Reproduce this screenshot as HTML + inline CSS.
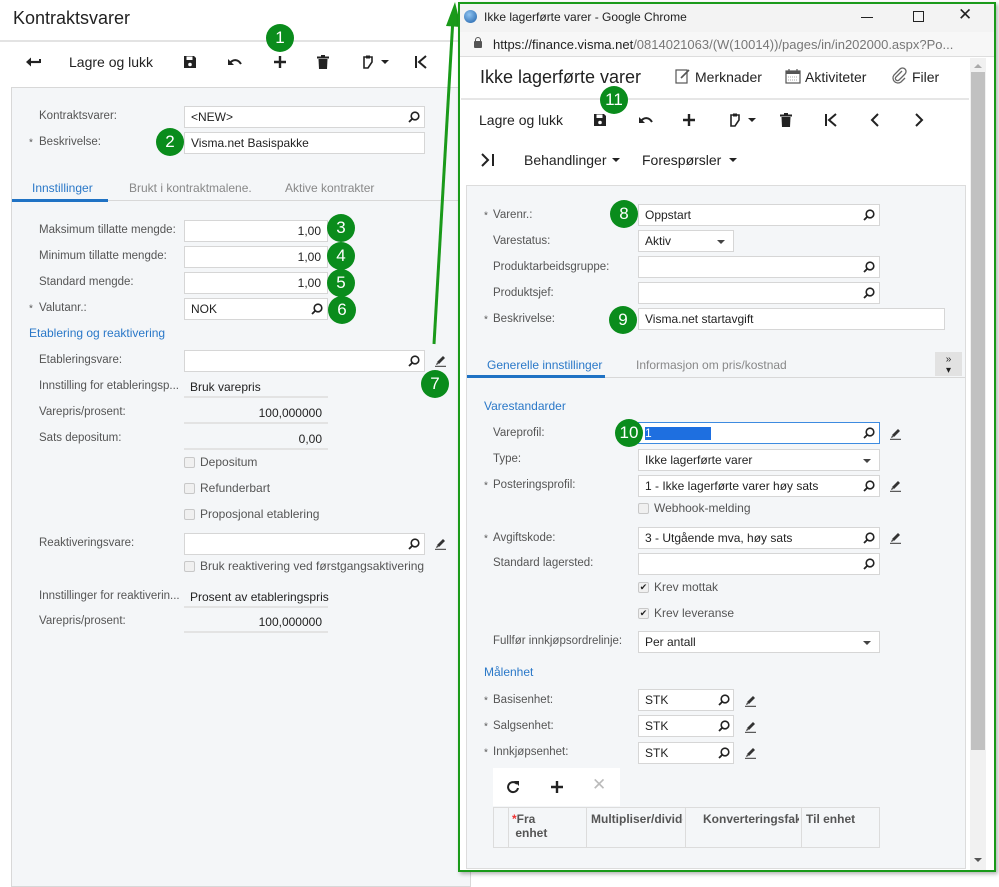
<!DOCTYPE html>
<html><head><meta charset="utf-8">
<style>
*{margin:0;padding:0;box-sizing:border-box}
body{width:999px;height:876px;position:relative;overflow:hidden;background:#fff;font-family:"Liberation Sans",Arial,sans-serif;font-size:12px;color:#222}
.a{position:absolute;white-space:nowrap}
.lbl{position:absolute;color:#555;font-size:11.5px;white-space:nowrap;transform:translateY(-50%)}
.star{position:absolute;color:#555;font-size:10px;transform:translateY(-50%)}
.inp{position:absolute;background:#fff;border:1px solid #d6d6d6;height:22px;font-size:12px;line-height:20px;padding-left:6px;white-space:nowrap}
.num{text-align:right;padding-right:6px}
.ro{position:absolute;border-bottom:2px solid #e3e3e3;height:22px;line-height:22px;padding-left:6px;font-size:12px;white-space:nowrap}
.c{position:absolute;width:28px;height:28px;border-radius:50%;background:#0a8c1c;color:#fff;font-size:17px;text-align:center;line-height:28px;transform:translate(-50%,-50%)}
.cb{position:absolute;width:11px;height:11px;border:1px solid #c8c8c8;border-radius:2px;background:#f0f0f0}
.cbt{position:absolute;color:#555;font-size:12px;transform:translateY(-50%);white-space:nowrap}
.blue{color:#2a78c8}
.mag{position:absolute;width:12px;height:12px}
.pen{position:absolute;width:13px;height:13px}
.sel::after{content:"";position:absolute;right:8px;top:9px;border:4px solid transparent;border-top:4px solid #444}
.tb{position:absolute;transform:translate(-50%,-50%);font-size:15px;color:#222}
</style></head><body>
<svg width="0" height="0" style="position:absolute"><defs>
<symbol id="m" viewBox="0 0 12 12"><circle cx="7" cy="5" r="3.8" fill="none" stroke="#222" stroke-width="1.6"/><line x1="4.3" y1="7.7" x2="1" y2="11" stroke="#222" stroke-width="1.8"/></symbol>
<symbol id="p" viewBox="0 0 13 13"><path d="M3 8 L9 2 L11 4 L5 10 Z" fill="#333"/><path d="M3 8.5 L2 11 L4.5 10Z" fill="#333"/><path d="M1 12.3 H12" stroke="#333" stroke-width="1"/></symbol>
<symbol id="save" viewBox="0 0 14 14"><path d="M1 1 H11 L13 3 V13 H1 Z" fill="#222"/><rect x="3.5" y="1.5" width="6" height="3.5" fill="#fff"/><circle cx="7" cy="9.5" r="1.8" fill="#fff"/></symbol>
<symbol id="undo" viewBox="0 0 16 12"><path d="M3 6 C6 2,11 2,14 7" fill="none" stroke="#222" stroke-width="2"/><path d="M1 2 L1 8 L7 8Z" fill="#222"/></symbol>
<symbol id="plus" viewBox="0 0 14 14"><path d="M7 1 V13 M1 7 H13" stroke="#222" stroke-width="2.4"/></symbol>
<symbol id="trash" viewBox="0 0 12 14"><rect x="0" y="1.5" width="12" height="2" fill="#222"/><rect x="4" y="0" width="4" height="2" fill="#222"/><path d="M1.5 4 H10.5 L10 14 H2 Z" fill="#222"/></symbol>
<symbol id="clip" viewBox="0 0 12 14"><path d="M2 2 H10 V7 L6 13 H2 Z" fill="none" stroke="#222" stroke-width="1.6"/><rect x="4" y="0.5" width="4" height="3" fill="#222"/></symbol>
<symbol id="first" viewBox="0 0 14 14"><path d="M2 1 V13" stroke="#222" stroke-width="2"/><path d="M12 1 L5 7 L12 13" fill="none" stroke="#222" stroke-width="2"/></symbol>
</defs></svg>

<!-- LEFT -->
<div class="a" style="left:13px;top:8px;font-size:18px;color:#222">Kontraktsvarer</div>
<div class="a" style="left:0;top:40px;width:460px;height:2px;background:#e3e3e3"></div>
<svg class="a" style="left:25px;top:56px" width="16" height="12"><path d="M15 6 H4" stroke="#222" stroke-width="2.2"/><path d="M1 6 L6 1.5 V10.5Z" fill="#222"/><path d="M15 3 V7" stroke="#222" stroke-width="2"/></svg>
<div class="a" style="left:69px;top:54px;font-size:14px">Lagre og lukk</div>
<svg class="a" style="left:183px;top:55px" width="14" height="14"><use href="#save"/></svg>
<svg class="a" style="left:227px;top:57px" width="16" height="12"><use href="#undo"/></svg>
<svg class="a" style="left:273px;top:55px" width="14" height="14"><use href="#plus"/></svg>
<svg class="a" style="left:317px;top:55px" width="12" height="14"><use href="#trash"/></svg>
<svg class="a" style="left:362px;top:55px" width="12" height="14"><use href="#clip"/></svg>
<div class="a" style="left:381px;top:60px;border:4px solid transparent;border-top:4px solid #222"></div>
<svg class="a" style="left:414px;top:55px" width="14" height="14"><use href="#first"/></svg>
<div class="c" style="left:280px;top:38px">1</div>

<div class="a" style="left:11px;top:87px;width:460px;height:800px;background:#f4f6f8;border:1px solid #d8d8d8"></div>
<div class="lbl" style="left:39px;top:116px">Kontraktsvarer:</div>
<div class="inp" style="left:184px;top:106px;width:241px">&lt;NEW&gt;</div>
<svg class="mag" style="left:408px;top:111px"><use href="#m"/></svg>
<div class="star" style="left:29px;top:143px">*</div>
<div class="lbl" style="left:39px;top:142px">Beskrivelse:</div>
<div class="inp" style="left:184px;top:132px;width:241px">Visma.net Basispakke</div>
<div class="c" style="left:170px;top:142px">2</div>

<div class="a" style="left:12px;top:200px;width:448px;height:1px;background:#d8d8d8"></div>
<div class="a blue" style="left:32px;top:181px">Innstillinger</div>
<div class="a" style="left:12px;top:199px;width:96px;height:3px;background:#1f72c4"></div>
<div class="a" style="left:129px;top:181px;color:#888">Brukt i kontraktmalene.</div>
<div class="a" style="left:285px;top:181px;color:#888">Aktive kontrakter</div>

<div class="lbl" style="left:39px;top:230px">Maksimum tillatte mengde:</div>
<div class="inp num" style="left:184px;top:220px;width:144px">1,00</div>
<div class="lbl" style="left:39px;top:256px">Minimum tillatte mengde:</div>
<div class="inp num" style="left:184px;top:246px;width:144px">1,00</div>
<div class="lbl" style="left:39px;top:282px">Standard mengde:</div>
<div class="inp num" style="left:184px;top:272px;width:144px">1,00</div>
<div class="star" style="left:29px;top:309px">*</div>
<div class="lbl" style="left:39px;top:308px">Valutanr.:</div>
<div class="inp" style="left:184px;top:298px;width:144px">NOK</div>
<svg class="mag" style="left:311px;top:303px"><use href="#m"/></svg>
<div class="c" style="left:341px;top:228px">3</div>
<div class="c" style="left:341px;top:256px">4</div>
<div class="c" style="left:341px;top:283px">5</div>
<div class="c" style="left:342px;top:310px">6</div>

<div class="a blue" style="left:29px;top:326px">Etablering og reaktivering</div>
<div class="lbl" style="left:39px;top:360px">Etableringsvare:</div>
<div class="inp" style="left:184px;top:350px;width:241px"></div>
<svg class="mag" style="left:408px;top:355px"><use href="#m"/></svg>
<svg class="pen" style="left:434px;top:354px"><use href="#p"/></svg>
<div class="c" style="left:435px;top:384px">7</div>
<div class="lbl" style="left:39px;top:386px">Innstilling for etableringsp...</div>
<div class="ro" style="left:184px;top:376px;width:144px">Bruk varepris</div>
<div class="lbl" style="left:39px;top:412px">Varepris/prosent:</div>
<div class="ro num" style="left:184px;top:402px;width:144px">100,000000</div>
<div class="lbl" style="left:39px;top:438px">Sats depositum:</div>
<div class="ro num" style="left:184px;top:428px;width:144px">0,00</div>
<div class="cb" style="left:184px;top:457px"></div><div class="cbt" style="left:200px;top:462px">Depositum</div>
<div class="cb" style="left:184px;top:483px"></div><div class="cbt" style="left:200px;top:488px">Refunderbart</div>
<div class="cb" style="left:184px;top:509px"></div><div class="cbt" style="left:200px;top:514px">Proposjonal etablering</div>
<div class="lbl" style="left:39px;top:543px">Reaktiveringsvare:</div>
<div class="inp" style="left:184px;top:533px;width:241px"></div>
<svg class="mag" style="left:408px;top:538px"><use href="#m"/></svg>
<svg class="pen" style="left:434px;top:537px"><use href="#p"/></svg>
<div class="cb" style="left:184px;top:561px"></div><div class="cbt" style="left:200px;top:566px">Bruk reaktivering ved førstgangsaktivering</div>
<div class="lbl" style="left:39px;top:596px">Innstillinger for reaktiverin...</div>
<div class="ro" style="left:184px;top:586px;width:144px">Prosent av etableringspris</div>
<div class="lbl" style="left:39px;top:621px">Varepris/prosent:</div>
<div class="ro num" style="left:184px;top:611px;width:144px">100,000000</div>

<!-- arrow -->
<svg class="a" style="left:0;top:0" width="999" height="876">
<line x1="434" y1="344" x2="453" y2="18" stroke="#1a9a1a" stroke-width="3"/>
<path d="M446 26 L455 2 L461 27 Z" fill="#1a9a1a"/>
</svg>

<!-- RIGHT WINDOW -->
<div class="a" style="left:458px;top:2px;width:538px;height:870px;border:2px solid #1a9a1a;background:#fff;box-shadow:2px 2px 4px rgba(0,0,0,.3)"></div>
<div class="a" style="left:460px;top:4px;width:534px;height:28px;background:#f3f3f3"></div>
<div class="a" style="left:464px;top:10px;width:13px;height:13px;border-radius:50%;background:radial-gradient(circle at 40% 35%,#8fc3f0,#1c5fa8)"></div>
<div class="a" style="left:484px;top:10px;font-size:12px;color:#222">Ikke lagerførte varer - Google Chrome</div>
<div class="a" style="left:861px;top:17px;width:12px;height:1px;background:#222"></div>
<div class="a" style="left:913px;top:11px;width:11px;height:11px;border:1px solid #222"></div>
<div class="a" style="left:958px;top:5px;font-size:17px;color:#222">✕</div>
<div class="a" style="left:460px;top:32px;width:534px;height:25px;background:#f7f7f7;border-bottom:1px solid #ddd"></div>
<div class="a" style="left:474px;top:41px;width:8px;height:7px;background:#555;border-radius:1px"></div>
<div class="a" style="left:475px;top:37px;width:6px;height:6px;border:1.5px solid #555;border-radius:3px 3px 0 0"></div>
<div class="a" style="left:493px;top:37px;font-size:13px;color:#777"><span style="color:#222">https://finance.visma.net</span>/0814021063/(W(10014))/pages/in/in202000.aspx?Po...</div>

<div class="a" style="left:970px;top:58px;width:16px;height:812px;background:#f1f1f1"></div>
<div class="a" style="left:971px;top:72px;width:14px;height:678px;background:#c1c1c1"></div>
<div class="a" style="left:974px;top:64px;border:4px solid transparent;border-bottom:4px solid #aaa;border-top:0"></div>
<div class="a" style="left:974px;top:858px;border:4px solid transparent;border-top:4px solid #555;border-bottom:0"></div>

<div class="a" style="left:480px;top:67px;font-size:18px;color:#222">Ikke lagerførte varer</div>
<svg class="a" style="left:675px;top:68px" width="16" height="16"><rect x="1" y="2" width="11" height="13" fill="none" stroke="#555" stroke-width="1.2"/><path d="M6 10 L14 2" stroke="#555" stroke-width="1.6"/></svg>
<div class="a" style="left:695px;top:69px;font-size:14px">Merknader</div>
<svg class="a" style="left:785px;top:68px" width="16" height="16"><rect x="1" y="3" width="14" height="12" fill="none" stroke="#555" stroke-width="1.2"/><rect x="1" y="3" width="14" height="3" fill="#555"/><path d="M4 1 V4 M12 1 V4" stroke="#555" stroke-width="1.2"/><path d="M3 9 H13 M3 12 H13" stroke="#aaa" stroke-width="1" stroke-dasharray="1 1"/></svg>
<div class="a" style="left:805px;top:69px;font-size:14px">Aktiviteter</div>
<svg class="a" style="left:891px;top:67px" width="16" height="17"><path d="M11 4 L5 10 A2 2 0 0 0 8 13 L14 7 A3.5 3.5 0 0 0 9 2 L3 8 A5 5 0 0 0 10 15 L14 11" fill="none" stroke="#666" stroke-width="1.3"/></svg>
<div class="a" style="left:912px;top:69px;font-size:14px">Filer</div>
<div class="a" style="left:461px;top:98px;width:508px;height:2px;background:#e6e6e6"></div>

<div class="a" style="left:479px;top:112px;font-size:14px">Lagre og lukk</div>
<svg class="a" style="left:593px;top:113px" width="14" height="14"><use href="#save"/></svg>
<svg class="a" style="left:638px;top:115px" width="16" height="12"><use href="#undo"/></svg>
<svg class="a" style="left:682px;top:113px" width="14" height="14"><use href="#plus"/></svg>
<svg class="a" style="left:729px;top:113px" width="12" height="14"><use href="#clip"/></svg>
<div class="a" style="left:748px;top:118px;border:4px solid transparent;border-top:4px solid #222"></div>
<svg class="a" style="left:780px;top:113px" width="12" height="14"><use href="#trash"/></svg>
<svg class="a" style="left:824px;top:113px" width="14" height="14"><use href="#first"/></svg>
<svg class="a" style="left:869px;top:113px" width="12" height="14"><path d="M9 1 L3 7 L9 13" fill="none" stroke="#222" stroke-width="2"/></svg>
<svg class="a" style="left:913px;top:113px" width="12" height="14"><path d="M3 1 L9 7 L3 13" fill="none" stroke="#222" stroke-width="2"/></svg>
<div class="c" style="left:614px;top:100px">11</div>

<svg class="a" style="left:481px;top:153px" width="14" height="14"><path d="M1 1 L7 7 L1 13" fill="none" stroke="#222" stroke-width="2"/><path d="M12 1 V13" stroke="#222" stroke-width="2"/></svg>
<div class="a" style="left:524px;top:152px;font-size:14px">Behandlinger</div>
<div class="a" style="left:612px;top:158px;border:4px solid transparent;border-top:4px solid #222"></div>
<div class="a" style="left:642px;top:152px;font-size:14px">Forespørsler</div>
<div class="a" style="left:729px;top:158px;border:4px solid transparent;border-top:4px solid #222"></div>

<div class="a" style="left:466px;top:185px;width:500px;height:684px;background:#f4f6f8;border:1px solid #dcdcdc"></div>
<div class="star" style="left:484px;top:216px">*</div>
<div class="lbl" style="left:493px;top:215px">Varenr.:</div>
<div class="inp" style="left:638px;top:204px;width:242px">Oppstart</div>
<svg class="mag" style="left:863px;top:209px"><use href="#m"/></svg>
<div class="c" style="left:624px;top:214px">8</div>
<div class="lbl" style="left:493px;top:241px">Varestatus:</div>
<div class="inp sel" style="left:638px;top:230px;width:96px">Aktiv</div>
<div class="lbl" style="left:493px;top:267px">Produktarbeidsgruppe:</div>
<div class="inp" style="left:638px;top:256px;width:242px"></div>
<svg class="mag" style="left:863px;top:261px"><use href="#m"/></svg>
<div class="lbl" style="left:493px;top:293px">Produktsjef:</div>
<div class="inp" style="left:638px;top:282px;width:242px"></div>
<svg class="mag" style="left:863px;top:287px"><use href="#m"/></svg>
<div class="star" style="left:484px;top:320px">*</div>
<div class="lbl" style="left:493px;top:319px">Beskrivelse:</div>
<div class="inp" style="left:638px;top:308px;width:307px">Visma.net startavgift</div>
<div class="c" style="left:623px;top:320px">9</div>

<div class="a" style="left:467px;top:377px;width:498px;height:1px;background:#d8d8d8"></div>
<div class="a blue" style="left:487px;top:358px">Generelle innstillinger</div>
<div class="a" style="left:467px;top:375px;width:138px;height:3px;background:#1f72c4"></div>
<div class="a" style="left:636px;top:358px;color:#888">Informasjon om pris/kostnad</div>
<div class="a" style="left:935px;top:352px;width:27px;height:24px;background:#e2e2e2;font-size:10px;text-align:center;line-height:11px;padding-top:2px">»<br>▾</div>

<div class="a blue" style="left:484px;top:399px">Varestandarder</div>
<div class="lbl" style="left:493px;top:433px">Vareprofil:</div>
<div class="inp" style="left:638px;top:422px;width:242px;border-color:#3d8be0"><span style="background:#1e6fe0;color:#fff;display:inline-block;width:66px;line-height:13px">1</span></div>
<svg class="mag" style="left:863px;top:427px"><use href="#m"/></svg>
<svg class="pen" style="left:889px;top:427px"><use href="#p"/></svg>
<div class="c" style="left:629px;top:433px">10</div>
<div class="lbl" style="left:493px;top:459px">Type:</div>
<div class="inp sel" style="left:638px;top:449px;width:242px">Ikke lagerførte varer</div>
<div class="star" style="left:484px;top:486px">*</div>
<div class="lbl" style="left:493px;top:485px">Posteringsprofil:</div>
<div class="inp" style="left:638px;top:475px;width:242px">1 - Ikke lagerførte varer høy sats</div>
<svg class="mag" style="left:863px;top:480px"><use href="#m"/></svg>
<svg class="pen" style="left:889px;top:479px"><use href="#p"/></svg>
<div class="cb" style="left:638px;top:503px"></div><div class="cbt" style="left:654px;top:508px">Webhook-melding</div>
<div class="star" style="left:484px;top:539px">*</div>
<div class="lbl" style="left:493px;top:538px">Avgiftskode:</div>
<div class="inp" style="left:638px;top:527px;width:242px">3 - Utgående mva, høy sats</div>
<svg class="mag" style="left:863px;top:532px"><use href="#m"/></svg>
<svg class="pen" style="left:889px;top:531px"><use href="#p"/></svg>
<div class="lbl" style="left:493px;top:563px">Standard lagersted:</div>
<div class="inp" style="left:638px;top:553px;width:242px"></div>
<svg class="mag" style="left:863px;top:558px"><use href="#m"/></svg>
<div class="cb" style="left:638px;top:582px;font-size:9px;line-height:9px;text-align:center">✔</div><div class="cbt" style="left:654px;top:587px">Krev mottak</div>
<div class="cb" style="left:638px;top:608px;font-size:9px;line-height:9px;text-align:center">✔</div><div class="cbt" style="left:654px;top:613px">Krev leveranse</div>
<div class="lbl" style="left:493px;top:641px">Fullfør innkjøpsordrelinje:</div>
<div class="inp sel" style="left:638px;top:631px;width:242px">Per antall</div>

<div class="a blue" style="left:484px;top:665px">Målenhet</div>
<div class="star" style="left:484px;top:701px">*</div>
<div class="lbl" style="left:493px;top:700px">Basisenhet:</div>
<div class="inp" style="left:638px;top:689px;width:96px">STK</div>
<svg class="mag" style="left:718px;top:694px"><use href="#m"/></svg>
<svg class="pen" style="left:744px;top:694px"><use href="#p"/></svg>
<div class="star" style="left:484px;top:727px">*</div>
<div class="lbl" style="left:493px;top:726px">Salgsenhet:</div>
<div class="inp" style="left:638px;top:715px;width:96px">STK</div>
<svg class="mag" style="left:718px;top:720px"><use href="#m"/></svg>
<svg class="pen" style="left:744px;top:720px"><use href="#p"/></svg>
<div class="star" style="left:484px;top:753px">*</div>
<div class="lbl" style="left:493px;top:752px">Innkjøpsenhet:</div>
<div class="inp" style="left:638px;top:742px;width:96px">STK</div>
<svg class="mag" style="left:718px;top:747px"><use href="#m"/></svg>
<svg class="pen" style="left:744px;top:746px"><use href="#p"/></svg>

<div class="a" style="left:493px;top:768px;width:127px;height:38px;background:#fff"></div>
<svg class="a" style="left:506px;top:780px" width="14" height="14"><path d="M11 4 A5 5 0 1 0 12 8" fill="none" stroke="#222" stroke-width="2"/><path d="M8 1 L13 1 L13 6Z" fill="#222"/></svg>
<svg class="a" style="left:550px;top:780px" width="14" height="14"><use href="#plus"/></svg>
<div class="a" style="left:592px;top:775px;font-size:17px;color:#bbb">✕</div>
<div class="a" style="left:493px;top:807px;width:387px;height:41px;background:#f4f6f8;border:1px solid #dcdcdc"></div>
<div class="a" style="left:508px;top:807px;width:1px;height:41px;background:#dcdcdc"></div>
<div class="a" style="left:586px;top:807px;width:1px;height:41px;background:#dcdcdc"></div>
<div class="a" style="left:685px;top:807px;width:1px;height:41px;background:#dcdcdc"></div>
<div class="a" style="left:801px;top:807px;width:1px;height:41px;background:#dcdcdc"></div>
<div class="a" style="left:512px;top:812px;color:#555;font-weight:bold;line-height:14px"><span style="color:#e33">*</span>Fra<br>&nbsp;enhet</div>
<div class="a" style="left:591px;top:812px;color:#555;font-weight:bold;width:92px;overflow:hidden">Multipliser/divider</div>
<div class="a" style="left:703px;top:812px;color:#555;font-weight:bold;width:96px;overflow:hidden">Konverteringsfaktor</div>
<div class="a" style="left:806px;top:812px;color:#555;font-weight:bold">Til enhet</div>
</body></html>
